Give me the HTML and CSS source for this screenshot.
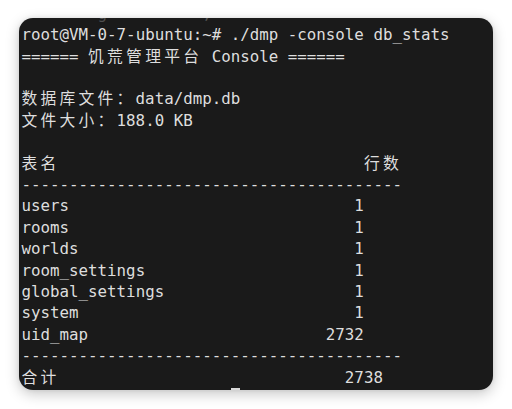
FILE: index.html
```html
<!DOCTYPE html>
<html lang="zh">
<head>
<meta charset="utf-8">
<link rel="stylesheet" href="styles.css">
</head>
<body>
<div class="term">
  <div class="screen">
    <div class="ln ghost">        g          ,</div>
    <div class="ln">root@VM-0-7-ubuntu:~# ./dmp -console db_stats</div>
    <div class="ln">====== <span class="cj">饥荒管理平台</span> Console ======</div>
    <div class="ln"> </div>
    <div class="ln"><span class="cj">数据库文件：</span>data/dmp.db</div>
    <div class="ln"><span class="cj">文件大小：</span>188.0 KB</div>
    <div class="ln"> </div>
    <div class="ln"><span class="cj">表名</span>                                <span class="cj">行数</span></div>
    <div class="ln">----------------------------------------</div>
    <div class="ln">users                              1</div>
    <div class="ln">rooms                              1</div>
    <div class="ln">worlds                             1</div>
    <div class="ln">room_settings                      1</div>
    <div class="ln">global_settings                    1</div>
    <div class="ln">system                             1</div>
    <div class="ln">uid_map                         2732</div>
    <div class="ln">----------------------------------------</div>
    <div class="ln"><span class="cj">合计</span>                              2738</div>
  </div>
  <div class="cursor"></div>
</div>
</body>
</html>
```

FILE: styles.css
```css
html, body {
  margin: 0;
  padding: 0;
  background: #ffffff;
}

body {
  width: 512px;
  height: 409px;
  overflow: hidden;
}

.term {
  position: relative;
  margin: 18px 0 0 19px;
  width: 474px;
  height: 372px;
  background: #1a1a1a;
  border-radius: 14px;
  box-shadow: 0 4px 14px rgba(0, 0, 0, 0.22), 0 0 4px rgba(0, 0, 0, 0.08);
  overflow: hidden;
}

.screen {
  padding: 6.3px 0 0 2.5px;
  font-family: "DejaVu Sans Mono", "Noto Sans CJK SC", monospace;
  font-size: 15.8px;
  line-height: 21.4px;
  color: #dedede;
}

.ln {
  white-space: pre;
  height: 21.4px;
}

.ghost {
  margin-top: -21.4px;
  color: #505050;
}

.cj {
  letter-spacing: calc(2ch - 1em);
}

.cursor {
  position: absolute;
  left: 212px;
  bottom: 0;
  width: 9px;
  height: 2px;
  background: #d8d8d8;
}
```
